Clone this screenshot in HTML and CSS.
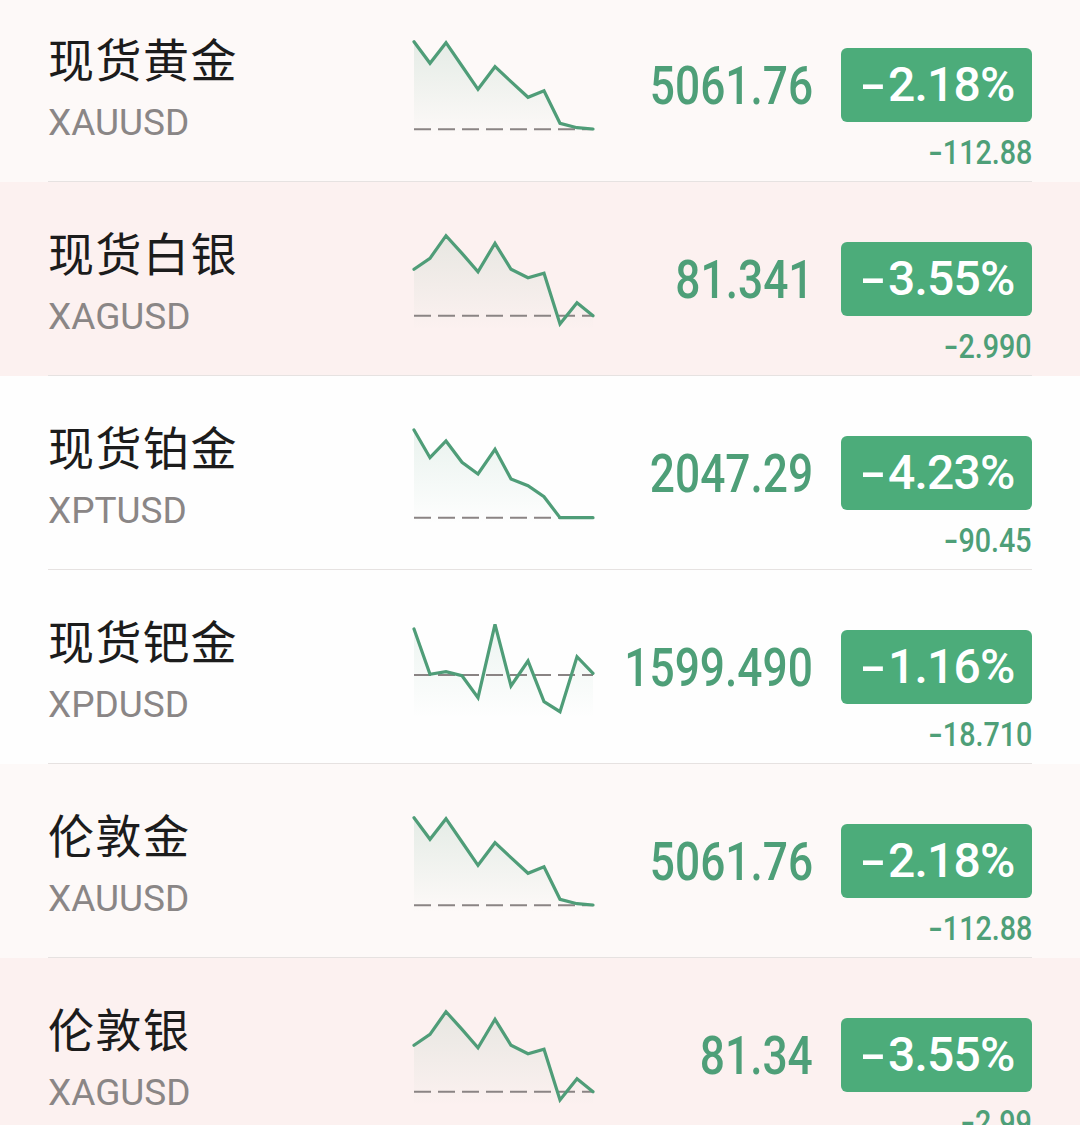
FILE: index.html
```html
<!DOCTYPE html>
<html lang="zh-CN">
<head>
<meta charset="utf-8">
<title>贵金属行情</title>
<link rel="stylesheet" href="styles.css">
</head>
<body>
<main class="list">
  <section class="row bg-faint">
    <div class="inner">
      <div class="name-col">
        <div class="name">现货黄金</div>
        <div class="symbol">XAUUSD</div>
      </div>
      <svg class="chart" viewBox="0 0 180 110" width="180" height="110">
        <defs><linearGradient id="g1" x1="0" y1="0" x2="0" y2="1"><stop offset="0" stop-color="#4f9d78" stop-opacity="0.14"/><stop offset="1" stop-color="#4f9d78" stop-opacity="0"/></linearGradient></defs>
        <polygon class="area" fill="url(#g1)" points="1,13.7 17,35.3 33,14.7 49,38 65,61.3 82,38.7 98,53.7 115,69.3 131,62.7 147,95.3 164,99.7 180,101 180,108 1,108"/>
        <line class="base" x1="1" y1="101.3" x2="180" y2="101.3"/>
        <polyline class="line" points="1,13.7 17,35.3 33,14.7 49,38 65,61.3 82,38.7 98,53.7 115,69.3 131,62.7 147,95.3 164,99.7 180,101"/>
      </svg>
      <div class="price-col"><span class="price">5061.76</span></div>
      <div class="change-col">
        <div class="badge"><span class="minus">-</span>2.18%</div>
        <div class="delta"><span class="minus">-</span>112.88</div>
      </div>
    </div>
  </section>

  <section class="row bg-pink">
    <div class="inner">
      <div class="name-col">
        <div class="name">现货白银</div>
        <div class="symbol">XAGUSD</div>
      </div>
      <svg class="chart" viewBox="0 0 180 110" width="180" height="110">
        <defs><linearGradient id="g2" x1="0" y1="0" x2="0" y2="1"><stop offset="0" stop-color="#4f9d78" stop-opacity="0.12"/><stop offset="1" stop-color="#4f9d78" stop-opacity="0"/></linearGradient></defs>
        <polygon class="area" fill="url(#g2)" points="1,47.3 17,36.3 33,13.7 49,31.3 65,49.7 82,21.3 98,47.3 115,55.7 131,51.3 147,102 164,80.7 180,93.7 180,108 1,108"/>
        <line class="base" x1="1" y1="93.7" x2="180" y2="93.7"/>
        <polyline class="line" points="1,47.3 17,36.3 33,13.7 49,31.3 65,49.7 82,21.3 98,47.3 115,55.7 131,51.3 147,102 164,80.7 180,93.7"/>
      </svg>
      <div class="price-col"><span class="price">81.341</span></div>
      <div class="change-col">
        <div class="badge"><span class="minus">-</span>3.55%</div>
        <div class="delta"><span class="minus">-</span>2.990</div>
      </div>
    </div>
  </section>

  <section class="row bg-white">
    <div class="inner">
      <div class="name-col">
        <div class="name">现货铂金</div>
        <div class="symbol">XPTUSD</div>
      </div>
      <svg class="chart" viewBox="0 0 180 110" width="180" height="110">
        <defs><linearGradient id="g3" x1="0" y1="0" x2="0" y2="1"><stop offset="0" stop-color="#4f9d78" stop-opacity="0.12"/><stop offset="1" stop-color="#4f9d78" stop-opacity="0"/></linearGradient></defs>
        <polygon class="area" fill="url(#g3)" points="1,14 17,41.7 33,25 49,46.3 65,58 82,33.3 98,63 115,69.7 131,80.7 147,101.7 164,101.7 180,101.7 180,108 1,108"/>
        <line class="base" x1="1" y1="101.7" x2="180" y2="101.7"/>
        <polyline class="line" points="1,14 17,41.7 33,25 49,46.3 65,58 82,33.3 98,63 115,69.7 131,80.7 147,101.7 164,101.7 180,101.7"/>
      </svg>
      <div class="price-col"><span class="price">2047.29</span></div>
      <div class="change-col">
        <div class="badge"><span class="minus">-</span>4.23%</div>
        <div class="delta"><span class="minus">-</span>90.45</div>
      </div>
    </div>
  </section>

  <section class="row bg-white">
    <div class="inner">
      <div class="name-col">
        <div class="name">现货钯金</div>
        <div class="symbol">XPDUSD</div>
      </div>
      <svg class="chart" viewBox="0 0 180 110" width="180" height="110">
        <defs><linearGradient id="g4" x1="0" y1="0" x2="0" y2="1"><stop offset="0" stop-color="#4f9d78" stop-opacity="0.10"/><stop offset="1" stop-color="#4f9d78" stop-opacity="0"/></linearGradient></defs>
        <polygon class="area" fill="url(#g4)" points="1,19 17,64.3 33,61.7 49,65.7 65,87.7 82,14.3 98,76 115,51 131,91.7 147,101.7 164,46.7 180,63.3 180,108 1,108"/>
        <line class="base" x1="1" y1="65" x2="180" y2="65"/>
        <polyline class="line" points="1,19 17,64.3 33,61.7 49,65.7 65,87.7 82,14.3 98,76 115,51 131,91.7 147,101.7 164,46.7 180,63.3"/>
      </svg>
      <div class="price-col"><span class="price">1599.490</span></div>
      <div class="change-col">
        <div class="badge"><span class="minus">-</span>1.16%</div>
        <div class="delta"><span class="minus">-</span>18.710</div>
      </div>
    </div>
  </section>

  <section class="row bg-faint">
    <div class="inner">
      <div class="name-col">
        <div class="name">伦敦金</div>
        <div class="symbol">XAUUSD</div>
      </div>
      <svg class="chart" viewBox="0 0 180 110" width="180" height="110">
        <defs><linearGradient id="g5" x1="0" y1="0" x2="0" y2="1"><stop offset="0" stop-color="#4f9d78" stop-opacity="0.14"/><stop offset="1" stop-color="#4f9d78" stop-opacity="0"/></linearGradient></defs>
        <polygon class="area" fill="url(#g5)" points="1,13.7 17,35.3 33,14.7 49,38 65,61.3 82,38.7 98,53.7 115,69.3 131,62.7 147,95.3 164,99.7 180,101 180,108 1,108"/>
        <line class="base" x1="1" y1="101.3" x2="180" y2="101.3"/>
        <polyline class="line" points="1,13.7 17,35.3 33,14.7 49,38 65,61.3 82,38.7 98,53.7 115,69.3 131,62.7 147,95.3 164,99.7 180,101"/>
      </svg>
      <div class="price-col"><span class="price">5061.76</span></div>
      <div class="change-col">
        <div class="badge"><span class="minus">-</span>2.18%</div>
        <div class="delta"><span class="minus">-</span>112.88</div>
      </div>
    </div>
  </section>

  <section class="row bg-pink">
    <div class="inner">
      <div class="name-col">
        <div class="name">伦敦银</div>
        <div class="symbol">XAGUSD</div>
      </div>
      <svg class="chart" viewBox="0 0 180 110" width="180" height="110">
        <defs><linearGradient id="g6" x1="0" y1="0" x2="0" y2="1"><stop offset="0" stop-color="#4f9d78" stop-opacity="0.12"/><stop offset="1" stop-color="#4f9d78" stop-opacity="0"/></linearGradient></defs>
        <polygon class="area" fill="url(#g6)" points="1,47.3 17,36.3 33,13.7 49,31.3 65,49.7 82,21.3 98,47.3 115,55.7 131,51.3 147,102 164,80.7 180,93.7 180,108 1,108"/>
        <line class="base" x1="1" y1="93.7" x2="180" y2="93.7"/>
        <polyline class="line" points="1,47.3 17,36.3 33,13.7 49,31.3 65,49.7 82,21.3 98,47.3 115,55.7 131,51.3 147,102 164,80.7 180,93.7"/>
      </svg>
      <div class="price-col"><span class="price">81.34</span></div>
      <div class="change-col">
        <div class="badge"><span class="minus">-</span>3.55%</div>
        <div class="delta"><span class="minus">-</span>2.99</div>
      </div>
    </div>
  </section>
</main>
</body>
</html>
```

FILE: styles.css
```css
html, body {
  margin: 0;
  padding: 0;
  overflow: hidden;
  background: #fefefe;
}

.list {
  margin-top: -12px;
}

.row {
  padding: 0 48px;
  height: 194px;
  box-sizing: border-box;
}

.bg-faint { background: #fdf9f8; }
.bg-pink { background: #fcf1f0; }
.bg-white { background: #fefefe; }

.inner {
  height: 194px;
  box-sizing: border-box;
  border-bottom: 1px solid #e6e2e1;
  display: grid;
  grid-template-columns: 365px 180px minmax(0, 1fr) 191px;
  align-items: start;
}

.name-col {
  padding-top: 46px;
}

.name {
  font-family: "Noto Sans CJK SC", "Noto Sans", sans-serif;
  font-size: 46px;
  line-height: 46px;
  color: #1c1c1c;
  letter-spacing: 1.5px;
}

.symbol {
  margin-top: 25px;
  font-family: Roboto, "Liberation Sans", sans-serif;
  font-size: 37px;
  line-height: 36px;
  color: #8a8686;
}

.chart {
  margin-top: 40px;
  overflow: visible;
  display: block;
}

.chart .line {
  fill: none;
  stroke: #4f9d78;
  stroke-width: 3.2;
  stroke-linejoin: miter;
  stroke-linecap: round;
}

.chart .base {
  stroke: #8a8484;
  stroke-width: 2;
  stroke-dasharray: 17 7;
}

.price-col {
  padding-right: 28px;
  height: 134px;
  display: flex;
  align-items: center;
  justify-content: flex-end;
  padding-top: 60px;
  box-sizing: border-box;
  white-space: nowrap;
}

.price {
  display: inline-block;
  flex: none;
  font-family: Roboto, "Liberation Sans", sans-serif;
  font-weight: 500;
  font-size: 54px;
  line-height: 74px;
  color: #4e9f78;
  transform: scaleX(0.82);
  transform-origin: right center;
  margin-top: 2px;
}

.change-col {
  padding-top: 60px;
  display: flex;
  flex-direction: column;
  align-items: flex-end;
}

.badge {
  width: 191px;
  height: 74px;
  border-radius: 6px;
  background: #4cac7a;
  color: #ffffff;
  font-family: Roboto, "Liberation Sans", sans-serif;
  font-weight: 500;
  font-size: 48px;
  line-height: 74px;
  text-align: center;
  box-sizing: border-box;
  padding-left: 2px;
  letter-spacing: -0.8px;
  white-space: nowrap;
}

.minus {
  display: inline-block;
  transform: scaleX(1.6);
  transform-origin: left center;
  margin-right: 0.25em;
}

.delta .minus {
  transform: scaleX(1.45);
  margin-right: 0.16em;
}

.delta {
  margin-top: 14px;
  font-family: Roboto, "Liberation Sans", sans-serif;
  font-weight: 500;
  font-size: 33px;
  line-height: 33px;
  color: #4e9f78;
  transform: scaleX(0.87);
  transform-origin: right center;
  white-space: nowrap;
}
```
